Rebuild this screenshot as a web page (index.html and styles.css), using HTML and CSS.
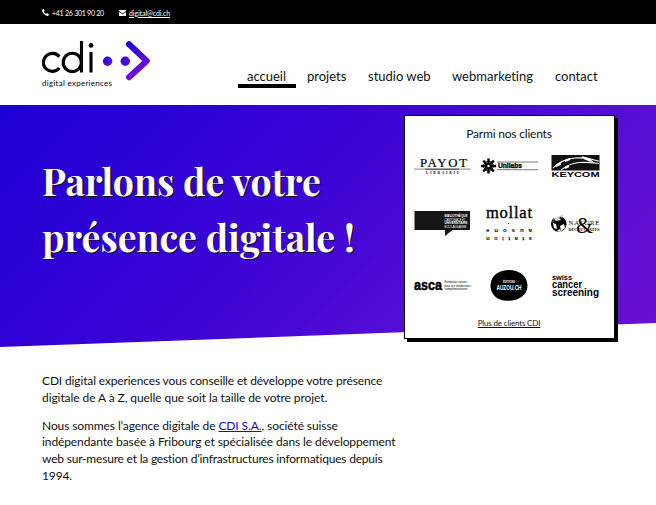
FILE: index.html
```html
<!DOCTYPE html>
<html lang="fr">
<head>
<meta charset="utf-8">
<title>CDI digital experiences</title>
<link rel="stylesheet" href="styles.css">
</head>
<body>
<div class="topbar">
  <svg class="phone" viewBox="0 0 7 7"><path d="M.2.6 1.7 0l1 1.8-.8.8q.6 1.6 2.2 2.3l.9-.8L7 5.3 6.3 6.8Q4.6 7.4 2.1 5.2-.4 3 .2.6Z"/></svg>
  <span class="tel">+41 26 301 90 20</span>
  <svg class="mail" viewBox="0 0 7 6"><path d="M.5 0h6q.5 0 .5.6v.5L3.5 3.4 0 1.1V.6Q0 0 .5 0ZM0 1.9 3.5 4.2 7 1.9V5.5q0 .5-.5.5h-6Q0 6 0 5.5Z"/></svg>
  <a class="email" href="#">digital@cdi.ch</a>
</div>
<header class="header">
  <svg class="logo" viewBox="42 38 110 52">
    <defs><linearGradient id="brand" gradientUnits="userSpaceOnUse" x1="124" y1="42" x2="144" y2="80"><stop offset="0" stop-color="#1a00dc"/><stop offset="1" stop-color="#8b12d8"/></linearGradient>
    <linearGradient id="dot" x1="0" y1="0" x2="1" y2="1"><stop offset="0" stop-color="#1a00dc"/><stop offset="1" stop-color="#6c10d8"/></linearGradient></defs>
    <g fill="none" stroke="#000" stroke-width="3.1">
      <path d="M59.300 56.700a9 9 0 1 0 0 11.400M81.500 41V72.500"/>
      <circle cx="72.300" cy="62.400" r="9.100"/>
      <path d="M91 52V72.500"/>
    </g>
    <circle cx="91" cy="45.400" r="2.400"/>
    <circle cx="107.600" cy="61.200" r="4.700" fill="url(#dot)"/><circle cx="125.300" cy="61.200" r="4.700" fill="url(#dot)"/>
    <path d="m129 44.300 17.800 16.700L129 77.200" fill="none" stroke="url(#brand)" stroke-width="6" stroke-linecap="round" stroke-linejoin="round"/>
    <text class="lato" x="42" y="86" font-size="8" textLength="70">digital experiences</text>
  </svg>
  <nav class="nav">
    <a class="active" href="#">accueil</a><a class="n2" href="#">projets</a><a class="n3" href="#">studio web</a><a class="n4" href="#">webmarketing</a><a class="n5" href="#">contact</a>
  </nav>
</header>
<section class="hero">
  <h1>Parlons de votre<br>présence digitale !</h1>
  <aside class="clients">
    <h2>Parmi nos clients</h2>
    <div class="logos">
      <svg width="57" height="50" viewBox="414 142 57 50">
        <text class="serif" x="420" y="167" font-size="12.800" textLength="47" stroke="#000" stroke-width=".2">PAYOT</text>
        <path d="M414 169.100h56.500" stroke="#777" stroke-width=".9"/><path d="M425 169.200h34" stroke="#222" stroke-width=".8"/>
        <text class="serif" x="426" y="174" font-size="3.500" font-weight="bold" textLength="33">LIBRAIRIE</text>
      </svg>
      <svg width="57" height="50" viewBox="481 142 57 50">
        <path d="M488.500 158.500v15M481 166h15M483.200 160.700l10.600 10.600M493.800 160.700l-10.600 10.600" stroke="#000" stroke-width="2.400"/>
        <circle cx="488.500" cy="166" r="4.800" fill="none" stroke="#000" stroke-width="1"/><circle cx="488.500" cy="166" r="1.200" fill="#fff"/>
        <path d="M497 162h41M497 169.700h41" stroke="#555" stroke-width=".8"/>
        <text class="sans bold" x="498" y="168.300" font-size="6.400" textLength="24" lengthAdjust="spacingAndGlyphs" stroke="#000" stroke-width=".3">Unilabs</text>
      </svg>
      <svg width="50" height="50" viewBox="551 142 50 50">
        <path d="M551.500 155h48v15.500h-48Z" fill="#111"/>
        <g fill="none" stroke="#fff"><path d="M553 168q9-9 22-10t18 4M561 170q9-7 18-7.500t20 1M582 156.800l17 4.500" stroke-width="1.100"/><path d="m556 166 5-2.500M565 161l5-2M565 168l4-2M584 158l7 3" stroke-width="2"/></g>
        <text class="sans bold" x="551.500" y="177.200" font-size="8" textLength="48" lengthAdjust="spacingAndGlyphs">KEYCOM</text>
      </svg>
      <svg width="57" height="65" viewBox="414 192 57 65">
        <path d="M414.500 211h55.500v19h-17.500l-7.500 6v-6h-30.500Z" fill="#161616"/>
        <g class="sans" fill="#fff" font-size="2.900"><text x="444.500" y="217.300" font-weight="bold" textLength="23" lengthAdjust="spacingAndGlyphs">BIBLIOTHÈQUE</text><text x="444.500" y="220.800" textLength="21" lengthAdjust="spacingAndGlyphs">CANTONALE ET</text><text x="444.500" y="224.300" font-weight="bold" textLength="23" lengthAdjust="spacingAndGlyphs">UNIVERSITAIRE</text><text x="444.500" y="227.800" textLength="22" lengthAdjust="spacingAndGlyphs">BCU LAUSANNE</text></g>
      </svg>
      <svg width="57" height="65" viewBox="481 192 57 65">
        <text class="serif" x="486" y="217.800" font-size="16.500" textLength="46" stroke="#000" stroke-width=".35">mollat</text>
        <circle cx="508.500" cy="223.500" r=".6"/>
        <g class="sans bold" font-size="6"><text transform="rotate(180 509 230)" x="486" y="230.700" textLength="46">ausone</text><text transform="rotate(180 509 238)" x="486" y="239.200" textLength="46">station</text></g>
      </svg>
      <svg width="50" height="65" viewBox="551 192 50 65">
        <circle cx="558.800" cy="224" r="7.800"/>
        <path d="M553 217q5-4 9-1l-3 2 2 2-5 1ZM553 223l3 1 1 5-3-1ZM560 226l4-2 1 4-4 3ZM557 231l3-2 1 3Z" fill="#fff"/>
        <path d="m553 220 10-5M552 222l11-5" stroke="#888" stroke-width=".6"/>
        <g class="serif"><text x="568.500" y="224.500" font-size="6.800" textLength="31">NATURE</text><text x="568.500" y="230.500" font-size="3.800" font-weight="bold" textLength="31" lengthAdjust="spacingAndGlyphs">DÉCOUVERTES</text></g>
        <text class="serif" x="576" y="232.500" font-size="24" textLength="17" lengthAdjust="spacingAndGlyphs" stroke="#fff" stroke-width=".8" paint-order="stroke">&amp;</text>
      </svg>
      <svg width="57" height="55" viewBox="414 257 57 55">
        <text class="sans bold" x="414" y="290" font-size="15.500" textLength="28" lengthAdjust="spacingAndGlyphs" stroke="#000" stroke-width=".5">asca</text>
        <g class="sans" font-size="2.900"><text x="444.500" y="283.300" textLength="22" lengthAdjust="spacingAndGlyphs">Fondation suisse</text><text x="444.500" y="286.700" textLength="26" lengthAdjust="spacingAndGlyphs">pour les médecines</text><text x="444.500" y="290.100" textLength="23" lengthAdjust="spacingAndGlyphs">complémentaires</text></g>
      </svg>
      <svg width="57" height="55" viewBox="481 257 57 55">
        <path d="M490.500 286c0-9 6-15.500 18-16 12 0 19 7 19 15.500 0 9-8 15.500-20 15.300-11 0-17-7-17-14.800Z"/>
        <text class="sans bold" x="503" y="282.500" fill="#fff" font-size="2.800" textLength="12" lengthAdjust="spacingAndGlyphs">ÉDITIONS</text>
        <text class="sans bold" x="496.500" y="290" fill="#fff" font-size="7.500" textLength="25" lengthAdjust="spacingAndGlyphs">AUZOU.CH</text>
      </svg>
      <svg width="50" height="55" viewBox="551 257 50 55">
        <g class="sans bold"><text x="552" y="279.500" font-size="8" textLength="20" lengthAdjust="spacingAndGlyphs">swiss</text><text x="552" y="287.700" font-size="10" textLength="30" lengthAdjust="spacingAndGlyphs">cancer</text><text x="552" y="296" font-size="11.500" textLength="47" lengthAdjust="spacingAndGlyphs">screening</text></g>
      </svg>
    </div>
    <a class="more" href="#">Plus de clients CDI</a>
  </aside>
</section>
<main class="copy">
  <p><span class="l1">CDI digital experiences vous conseille et développe votre présence</span><br><span class="l2">digitale de A à Z, quelle que soit la taille de votre projet.</span></p>
  <p><span class="l3">Nous sommes l’agence digitale de <a href="#">CDI S.A.</a>, société suisse</span><br><span class="l4">indépendante basée à Fribourg et spécialisée dans le développement</span><br><span class="l5">web sur-mesure et la gestion d’infrastructures informatiques depuis</span><br><span class="l6">1994.</span></p>
</main>
</body>
</html>
```
FILE: styles.css
```css
* { box-sizing: border-box; }
body { margin: 0; height: 505px; overflow: hidden; background: #fff; color: #111; font-family: Lato, "Liberation Sans", sans-serif; font-variant-ligatures: none; }
a { color: inherit; }
.topbar { height: 24px; padding: 1px 0 0 42px; background: #000; color: #fff; display: flex; align-items: center; font-size: 7px; white-space: nowrap; }
.topbar svg { fill: #fff; flex: none; }
.phone { width: 7px; height: 7px; margin-right: 3px; }
.mail { width: 7px; height: 6px; margin-right: 3px; }
.tel { width: 67px; letter-spacing: -.25px; }
.email { letter-spacing: -.08px; }
.header { height: 81px; display: flex; align-items: flex-start; }
.logo { width: 110px; height: 52px; margin: 14px 0 0 42px; flex: none; }
.nav { display: flex; margin: 43px 0 0 86px; font-size: 13px; line-height: 19px; white-space: nowrap; }
.nav a { text-decoration: none; height: 21px; }
.nav .active { width: 58px; padding-left: 9px; border-bottom: 4px solid #000; }
.n2 { margin-left: 11px; width: 61px; }
.n3 { width: 84px; }
.n4 { width: 103px; }
.hero { position: relative; height: 242px; display: flex; align-items: flex-start; }
.hero::before { content: ""; position: absolute; inset: 0; z-index: -1; background: linear-gradient(135deg, #1c00d6 0%, #3903d5 40%, #590fd5 75%, #6c10d2 100%); clip-path: polygon(0 0, 100% 0, 100% 218px, 0 100%); }
h1 { width: 362px; margin: 47px 0 0 42px; color: #fff; font: bold 37.5px/56px "Playfair Display", "Liberation Serif", serif; text-shadow: 1px 1px 0 #111; white-space: nowrap; }
.clients { width: 211px; height: 224px; margin-top: 10px; padding: 10px 0 0 9px; background: #fff; border: 1px solid #000; box-shadow: 3px 3px 0 #000; }
h2 { margin: 0 10px 0 0; text-align: center; font-size: 12px; line-height: 16px; font-weight: 400; letter-spacing: -.2px; }
.logos { display: grid; grid-template-columns: 67px 70px 50px; grid-template-rows: 50px 65px 55px; }
.logos svg { display: block; }
.more { display: block; margin: 5px 10px 0 0; text-align: center; font-size: 8px; line-height: 12px; letter-spacing: -.17px; }
.lato { font-family: Lato, sans-serif; }
.serif { font-family: "Liberation Serif", serif; }
.sans { font-family: "Liberation Sans", sans-serif; }
.bold { font-weight: bold; }
.copy { padding: 26px 0 0 42px; font-size: 12px; line-height: 16.8px; letter-spacing: -.12px; white-space: nowrap; }
.copy p { margin: 0 0 11px; }
.copy a { color: #2a00d8; }
.l1 { letter-spacing: -.14px; }
.l2 { letter-spacing: -.08px; }
.l3, .l4 { letter-spacing: -.1px; }
.l5 { letter-spacing: -.2px; }
```
